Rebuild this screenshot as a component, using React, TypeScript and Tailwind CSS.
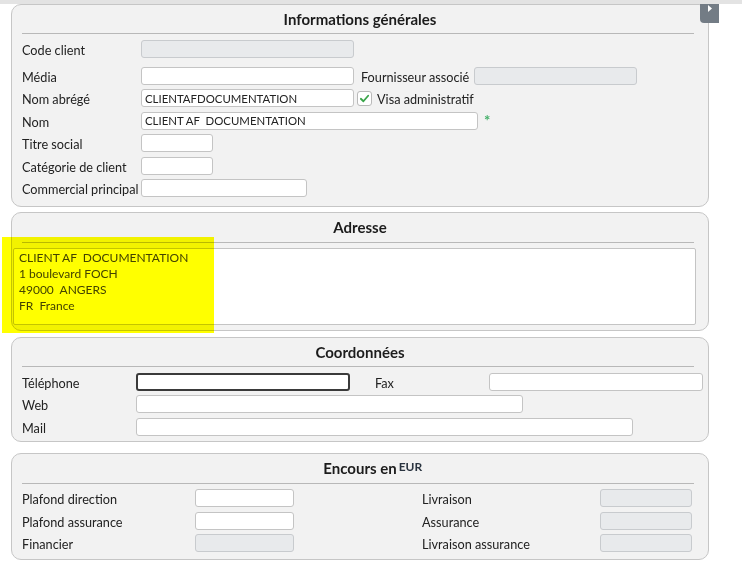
import React from "react";

type FieldProps = {
  w: string;
  value?: string;
  disabled?: boolean;
  focused?: boolean;
};

function Field({ w, value = "", disabled, focused }: FieldProps) {
  let cls = "h-[18px] rounded-[3px] px-[3px] text-[11.4px] text-[#222] outline-none shrink-0 ";
  if (disabled) cls += "bg-[#e8eaec] border border-[#c8cbce] ";
  else if (focused) cls += "bg-white border-2 border-[#3a3a3a] ";
  else cls += "bg-white border border-[#c4c4c4] ";
  return <input readOnly value={value} disabled={disabled} className={cls + w} />;
}

function Label({ w, children, className = "" }: { w: string; children: React.ReactNode; className?: string }) {
  return (
    <span className={"pt-[3px] text-[12.7px] leading-[15px] text-[#222] whitespace-nowrap shrink-0 " + w + " " + className}>
      {children}
    </span>
  );
}

function Panel({
  title,
  head = "h-[28px]",
  className = "",
  children,
}: {
  title: React.ReactNode;
  head?: string;
  className?: string;
  children: React.ReactNode;
}) {
  return (
    <div className={"ml-[11px] w-[698px] rounded-[10px] border border-[#c6c6c6] bg-[#f2f2f2] " + className}>
      <div className={"flex items-center justify-center text-[15px] font-bold text-[#1c1c1c] " + head}>{title}</div>
      <div className="ml-[10px] mr-[14px] h-px bg-[#b8b8b8]" />
      {children}
    </div>
  );
}

const Row = ({ children, className = "" }: { children: React.ReactNode; className?: string }) => (
  <div className={"flex h-[22.5px] items-center " + className}>{children}</div>
);

export default function App() {
  return (
    <div className="relative h-[582px] w-[742px] overflow-hidden bg-white" style={{ fontFamily: "Lato, 'Liberation Sans', sans-serif" }}>
      <div className="h-[4px] bg-[#e3e3e3]" />

      <Panel title="Informations générales">
        <div className="pl-[10px] pt-[3.5px] pb-[6.5px]">
          <Row className="mb-[4.5px]">
            <Label w="w-[119px]">Code client</Label>
            <Field w="w-[213px]" disabled />
          </Row>
          <Row>
            <Label w="w-[119px]">Média</Label>
            <Field w="w-[213px]" />
            <Label w="w-[113px]" className="ml-[7px]">Fournisseur associé</Label>
            <Field w="w-[163px]" disabled />
          </Row>
          <Row>
            <Label w="w-[119px]">Nom abrégé</Label>
            <Field w="w-[213px]" value="CLIENTAFDOCUMENTATION" />
            <span className="ml-[3px] flex h-[15px] w-[15px] items-center justify-center rounded-[3px] border border-[#b9b9b9] bg-white">
              <svg width="11" height="11" viewBox="0 0 12 12">
                <path d="M2 6.3 L4.8 9 L10 3" fill="none" stroke="#3aa54a" strokeWidth="2" strokeLinecap="round" strokeLinejoin="round" />
              </svg>
            </span>
            <Label w="" className="ml-[5px]">Visa administratif</Label>
          </Row>
          <Row>
            <Label w="w-[119px]">Nom</Label>
            <Field w="w-[337px]" value="CLIENT AF  DOCUMENTATION" />
            <span className="ml-[6px] -mt-[1px] text-[15px] font-bold leading-none text-[#45b06a]">*</span>
          </Row>
          <Row>
            <Label w="w-[119px]">Titre social</Label>
            <Field w="w-[72px]" />
          </Row>
          <Row>
            <Label w="w-[119px]">Catégorie de client</Label>
            <Field w="w-[72px]" />
          </Row>
          <Row>
            <Label w="w-[119px]">Commercial principal</Label>
            <Field w="w-[166px]" />
          </Row>
        </div>
      </Panel>

      <Panel title="Adresse" head="h-[29px]" className="mt-[5px]">
        <div className="pl-[1px] pr-[12px] pt-[5px] pb-[5px]">
          <div className="h-[77px] rounded-[2px] border border-[#c4c4c4] bg-white pl-[5px] pt-[1px] text-[12px] leading-[16px] text-[#444]">
            <div>CLIENT AF&nbsp; DOCUMENTATION</div>
            <div>1 boulevard FOCH</div>
            <div>49000&nbsp; ANGERS</div>
            <div>FR&nbsp; France</div>
          </div>
        </div>
      </Panel>

      <Panel title="Coordonnées" className="mt-[6px]">
        <div className="pl-[10px] pt-[3.5px] pb-[2.5px]">
          <Row>
            <Label w="w-[114px]">Téléphone</Label>
            <Field w="w-[214px]" focused />
            <Label w="w-[114px]" className="ml-[25px]">Fax</Label>
            <Field w="w-[214px]" />
          </Row>
          <Row>
            <Label w="w-[114px]">Web</Label>
            <Field w="w-[387px]" />
          </Row>
          <Row>
            <Label w="w-[114px]">Mail</Label>
            <Field w="w-[497px]" />
          </Row>
        </div>
      </Panel>

      <Panel
        title={
          <span className="relative">
            Encours en
            <span className="absolute left-full top-[1px] ml-[2px] text-[12px] font-bold text-[#2a3440]">EUR</span>
          </span>
        }
        head="h-[29px]"
        className="mt-[11px]"
      >
        <div className="pl-[10px] pt-[3.5px] pb-[4.5px]">
          <Row>
            <Label w="w-[173px]">Plafond direction</Label>
            <Field w="w-[99px]" />
            <Label w="w-[178px]" className="ml-[128px]">Livraison</Label>
            <Field w="w-[92px]" disabled />
          </Row>
          <Row>
            <Label w="w-[173px]">Plafond assurance</Label>
            <Field w="w-[99px]" />
            <Label w="w-[178px]" className="ml-[128px]">Assurance</Label>
            <Field w="w-[92px]" disabled />
          </Row>
          <Row>
            <Label w="w-[173px]">Financier</Label>
            <Field w="w-[99px]" disabled />
            <Label w="w-[178px]" className="ml-[128px]">Livraison assurance</Label>
            <Field w="w-[92px]" disabled />
          </Row>
        </div>
      </Panel>

      {/* side toggle tab */}
      <div className="absolute left-[700px] top-[4px] h-[19px] w-[19px] rounded-bl-[4px] bg-[#737c85]">
        <svg className="absolute left-[8px] top-[1px]" width="5" height="7" viewBox="0 0 5 7">
          <path d="M0 0 L4 3.5 L0 7 Z" fill="#fff" />
        </svg>
      </div>

      {/* highlight marker */}
      <div className="pointer-events-none absolute left-[2px] top-[237px] h-[96px] w-[212px] bg-[#ffff00] mix-blend-multiply" />
    </div>
  );
}
